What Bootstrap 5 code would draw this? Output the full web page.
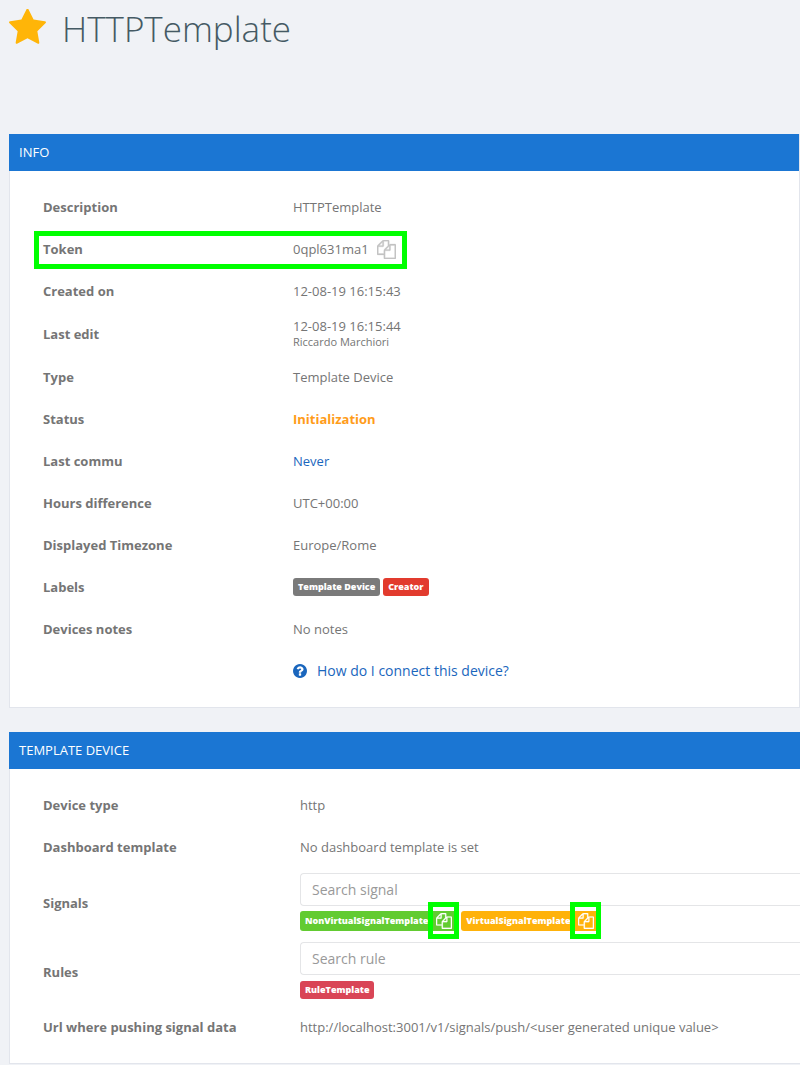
<!DOCTYPE html>
<html lang="en">
<head>
<meta charset="utf-8">
<meta name="viewport" content="width=device-width, initial-scale=1">
<title>HTTPTemplate</title>
<link href="https://cdn.jsdelivr.net/npm/bootstrap@5.3.0/dist/css/bootstrap.min.css" rel="stylesheet">
<style>
body{background:#f0f2f6;color:#757575;font:13px/20px "Open Sans",sans-serif}
.page-head{height:134px;padding:9px;gap:16px}
.page-head h1{font-size:35px;font-weight:300;line-height:40px;color:#455a64}
.star{width:37px;height:35px;fill:#ffb508}
.panel{margin-left:9px;border:1px solid #e2e5ec;border-top:0;background:#fff}
.panel h2{margin:0 0 0 -1px;padding:8px 10px;font-size:13px;font-weight:400;line-height:21px;background:#1b76d3;color:#fff}
.panel dl{padding:15px 0 15px 33px}
.item{min-height:42px}
.item-tall{min-height:44px}
.item dt{flex:0 0 250px}
.wide-labels dt{flex-basis:257px}
.item a{color:#1a66bd}
.author{font-size:11px;line-height:12px}
.help-link{font-size:14px;gap:10px}
.help-link svg{width:14px;height:14px}
.status{color:#ff9c1a}
.tag-list{gap:3px}
.tag{display:inline-flex;align-items:center;height:18px;padding:0 5px;border-radius:3px;font-size:9px;font-weight:800;color:#fff}
.tag-grey{background:#7a7a7a}.tag-red{background:#e23b2e}.tag-rose{background:#d94556}
.tag-green{background:#62cb31}.tag-amber{background:#ffb20a}
.tag-copy{height:20px}
.copy{border:0;padding:0;background:none;color:#c4c4c4;line-height:1;display:inline-flex}
.copy svg{width:19px;height:19px}
.tag .copy{color:#fff;margin:0 1px 0 8px}
.tag .copy svg{width:16px;height:16px}
.framed{position:relative}
.framed::after{content:"";position:absolute;border:5px solid #0f0;pointer-events:none;z-index:1}
.token::after{inset:3px auto 1px -9px;width:373px}
.copy.framed::after{inset:-11px -7px -10px -8px}
.item .form-control{height:33px;padding:5px 11px;border-color:#e4e5e7;border-radius:4px 0 0 4px;border-right:0;font-size:14px;line-height:21px}
.form-control::placeholder{color:#999}
.search{padding:5px 0 6px}
.search .tag-list{height:20px;margin-top:5px}
</style>
</head>
<body>
<svg class="d-none" xmlns="http://www.w3.org/2000/svg">
<symbol id="files" viewBox="0 0 1792 1792"><path fill="currentColor" stroke="currentColor" stroke-width="24" d="M1696 384q40 0 68 28t28 68v1216q0 40-28 68t-68 28h-960q-40 0-68-28t-28-68v-288h-544q-40 0-68-28t-28-68v-672q0-40 20-88t48-76l408-408q28-28 76-48t88-20h416q40 0 68 28t28 68v328q68-40 128-40h416zm-544 213l-299 299h299v-299zm-640-384l-299 299h299v-299zm196 647l316-316v-416h-384v416q0 40-28 68t-68 28h-416v640h512v-256q0-40 20-88t48-76zm956 804v-1152h-384v416q0 40-28 68t-68 28h-416v640h896z"/></symbol>
</svg>
<header class="page-head d-flex align-items-start">
<svg class="star" viewBox="64 59 1664 1560" aria-hidden="true"><path d="M1728 647q0 22-26 48l-363 354 86 500q1 7 1 20 0 21-10.500 35.500t-30.500 14.500q-19 0-40-12l-449-236-449 236q-22 12-40 12-21 0-31.500-14.500t-10.500-35.500q0-6 2-20l86-500-364-354q-25-27-25-48 0-37 56-46l502-73 225-455q19-41 49-41t49 41l225 455 502 73q56 9 56 46z"/></svg>
<h1 class="m-0">HTTPTemplate</h1>
</header>
<main>
<section class="panel mb-4">
<h2>INFO</h2>
<dl class="m-0">
<div class="item d-flex align-items-center"><dt>Description</dt><dd class="m-0">HTTPTemplate</dd></div>
<div class="item d-flex align-items-center framed token"><dt>Token</dt><dd class="m-0 d-flex align-items-center">0qpl631ma1<button class="copy ms-2" type="button" aria-label="Copy token"><svg><use href="#files"/></svg></button></dd></div>
<div class="item d-flex align-items-center"><dt>Created on</dt><dd class="m-0">12-08-19 16:15:43</dd></div>
<div class="item item-tall d-flex align-items-center"><dt>Last edit</dt><dd class="m-0 pb-1">12-08-19 16:15:44<div class="author">Riccardo Marchiori</div></dd></div>
<div class="item d-flex align-items-center"><dt>Type</dt><dd class="m-0">Template Device</dd></div>
<div class="item d-flex align-items-center"><dt>Status</dt><dd class="m-0 fw-bold status">Initialization</dd></div>
<div class="item d-flex align-items-center"><dt>Last commu</dt><dd class="m-0"><a class="text-decoration-none" href="#">Never</a></dd></div>
<div class="item d-flex align-items-center"><dt>Hours difference</dt><dd class="m-0">UTC+00:00</dd></div>
<div class="item d-flex align-items-center"><dt>Displayed Timezone</dt><dd class="m-0">Europe/Rome</dd></div>
<div class="item d-flex align-items-center"><dt>Labels</dt><dd class="m-0 d-flex tag-list"><span class="tag tag-grey">Template Device</span><span class="tag tag-red">Creator</span></dd></div>
<div class="item d-flex align-items-center"><dt>Devices notes</dt><dd class="m-0">No notes</dd></div>
<div class="item d-flex align-items-center"><dt></dt><dd class="m-0"><a class="help-link d-flex align-items-center text-decoration-none" href="#"><svg viewBox="128 128 1536 1536" aria-hidden="true"><path fill="currentColor" d="M1024 1376v-192q0-14-9-23t-23-9h-192q-14 0-23 9t-9 23v192q0 14 9 23t23 9h192q14 0 23-9t9-23zm256-672q0-88-55.500-163t-138.500-116-170-41q-243 0-371 213-15 24 8 42l132 100q7 6 19 6 16 0 25-12 53-68 86-92 34-24 86-24 48 0 85.500 26t37.500 59q0 38-20 61t-68 45q-63 28-115.500 86.500t-52.500 125.500v36q0 14 9 23t23 9h192q14 0 23-9t9-23q0-19 21.500-49.500t54.500-49.500q32-18 49-28.500t46-35 44.500-48 28-60.500 12.500-81zm384 192q0 209-103 385.500t-279.500 279.500-385.500 103-385.500-103-279.500-279.500-103-385.500 103-385.500 279.500-279.500 385.500-103 385.500 103 279.500 279.500 103 385.500z"/></svg>How do I connect this device?</a></dd></div>
</dl>
</section>
<section class="panel border-end-0">
<h2>TEMPLATE DEVICE</h2>
<dl class="m-0 wide-labels">
<div class="item d-flex align-items-center"><dt>Device type</dt><dd class="m-0">http</dd></div>
<div class="item d-flex align-items-center"><dt>Dashboard template</dt><dd class="m-0">No dashboard template is set</dd></div>
<div class="item d-flex align-items-center"><dt><label for="signal">Signals</label></dt><dd class="m-0 flex-fill search"><input class="form-control" id="signal" type="text" placeholder="Search signal">
<div class="tag-list d-flex"><span class="tag tag-copy tag-green">NonVirtualSignalTemplate<button class="copy framed" type="button" aria-label="Copy NonVirtualSignalTemplate"><svg><use href="#files"/></svg></button></span><span class="tag tag-copy tag-amber">VirtualSignalTemplate<button class="copy framed" type="button" aria-label="Copy VirtualSignalTemplate"><svg><use href="#files"/></svg></button></span></div></dd></div>
<div class="item d-flex align-items-center"><dt><label for="rule">Rules</label></dt><dd class="m-0 flex-fill search"><input class="form-control" id="rule" type="text" placeholder="Search rule">
<div class="tag-list d-flex align-items-center"><span class="tag tag-rose">RuleTemplate</span></div></dd></div>
<div class="item d-flex align-items-center"><dt>Url where pushing signal data</dt><dd class="m-0">http://localhost:3001/v1/signals/push/&lt;user generated unique value&gt;</dd></div>
</dl>
</section>
</main>
<script src="https://cdn.jsdelivr.net/npm/bootstrap@5.3.0/dist/js/bootstrap.bundle.min.js"></script>
</body>
</html>
